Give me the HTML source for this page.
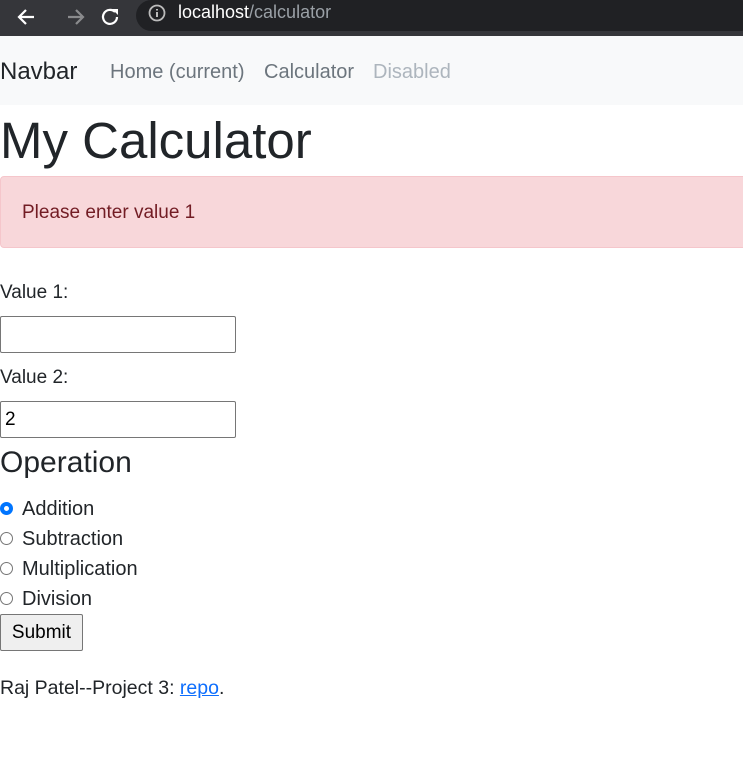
<!DOCTYPE html>
<html><head><style>
body{margin:0;width:743px;height:772px;overflow:hidden;background:#fff;font-family:"Liberation Sans",sans-serif;color:#212529;position:relative}
.a{position:absolute;white-space:nowrap}
.top{position:absolute;left:0;top:0;width:743px;height:36px;background:#35363a}
.url{position:absolute;left:136px;top:0;width:620px;height:31px;background:#202124;border-radius:16px}
.nav{position:absolute;left:0;top:36px;width:743px;height:69px;background:#f8f9fa}
input[type=text]{position:absolute;left:0;width:236px;height:37px;box-sizing:border-box;border:1px solid #767676;border-radius:2px;font:19px "Liberation Sans",sans-serif;padding:0 4px;margin:0}
.r{position:absolute;left:0;width:13px;height:13px;box-sizing:border-box;border:1px solid #767676;border-radius:50%;background:#fff}
</style></head><body>
<div class="top"></div>
<div class="url"></div>
<svg class="a" style="left:16px;top:5px" width="110" height="24" viewBox="0 0 110 24"><path d="M18 12H4M10 5l-7 7 7 7" stroke="#fff" stroke-width="2.2" fill="none"/><path d="M52 12h14M60 5l7 7-7 7" stroke="#8a8b8d" stroke-width="2.2" fill="none"/><path d="M99 7a7 7 0 1 0 2 5" stroke="#fff" stroke-width="2.2" fill="none"/><path d="M96 4h6v6z" fill="#fff"/></svg>
<svg class="a" style="left:148px;top:4px" width="18" height="18"><circle cx="9" cy="9" r="7.5" stroke="#bbb" stroke-width="1.8" fill="none"/><path d="M9 8v5M9 5v1.5" stroke="#bbb" stroke-width="2"/></svg>
<div class="a" style="left:178px;top:2px;font-size:18px;color:#fff">localhost<span style="color:#9aa0a6">/calculator</span></div>
<div class="nav"></div>
<div class="a" style="left:0;top:58px;font-size:24px;color:#212529">Navbar</div>
<div class="a" style="left:110px;top:61px;font-size:20px;color:#6c757d">Home (current)</div>
<div class="a" style="left:264px;top:61px;font-size:20px;color:#6c757d">Calculator</div>
<div class="a" style="left:373px;top:61px;font-size:20px;color:#adb5bd">Disabled</div>
<div class="a" style="left:0;top:111px;font-size:51px;font-weight:500">My Calculator</div>
<div class="a" style="left:0;top:176px;width:760px;height:72px;box-sizing:border-box;background:#f8d7da;border:1px solid #f5c6cb;border-radius:4px"></div>
<div class="a" style="left:22px;top:202px;font-size:19px;color:#721c24">Please enter value 1</div>
<div class="a" style="left:0;top:282px;font-size:19px">Value 1:</div>
<input type="text" style="top:316px">
<div class="a" style="left:0;top:367px;font-size:19px">Value 2:</div>
<input type="text" style="top:401px" value="2">
<div class="a" style="left:0;top:446px;font-size:30px">Operation</div>
<div class="r" style="top:502px;border:4px solid #0075ff"></div>
<div class="a" style="left:22px;top:498px;font-size:20px">Addition</div>
<div class="r" style="top:532px"></div>
<div class="a" style="left:22px;top:528px;font-size:20px">Subtraction</div>
<div class="r" style="top:562px"></div>
<div class="a" style="left:22px;top:558px;font-size:20px">Multiplication</div>
<div class="r" style="top:592px"></div>
<div class="a" style="left:22px;top:588px;font-size:20px">Division</div>
<div class="a" style="left:0;top:614px;width:83px;height:37px;box-sizing:border-box;background:#efefef;border:1px solid #767676;border-radius:2px;font-size:19px;text-align:center;line-height:35px;color:#000">Submit</div>
<div class="a" style="left:0;top:677px;font-size:19.5px">Raj Patel--Project 3: <span style="color:#0d6efd;text-decoration:underline">repo</span>.</div>
</body></html>
